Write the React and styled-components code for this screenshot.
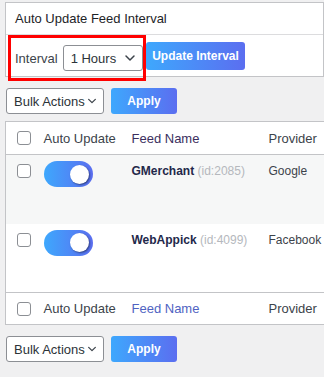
import styled, { createGlobalStyle } from "styled-components";

const feeds = [
  { name: "GMerchant", id: 2085, provider: "Google", alt: true },
  { name: "WebAppick", id: 4099, provider: "Facebook", alt: false },
];

export default function App() {
  return (
    <Page>
      <GlobalStyle />
      <Panel>
        <PanelHeader>Auto Update Feed Interval</PanelHeader>
        <PanelBody>
          <Highlight>
            <Label>Interval</Label>
            <Select width="80px">
              <span>1 Hours</span>
              <Chevron />
            </Select>
          </Highlight>
          <GradientButton width="99px" height="28px">
            Update Interval
          </GradientButton>
        </PanelBody>
      </Panel>

      <Actions />

      <Table>
        <colgroup>
          <col style={{ width: 33 }} />
          <col style={{ width: 88 }} />
          <col style={{ width: 137 }} />
          <col />
        </colgroup>
        <thead>
          <HeadRow>
            <Cell>
              <Checkbox />
            </Cell>
            <Cell>Auto Update</Cell>
            <Cell>
              <SortLink>Feed Name</SortLink>
            </Cell>
            <Cell>Provider</Cell>
          </HeadRow>
        </thead>
        <tbody>
          {feeds.map((feed) => (
            <Row key={feed.id} alt={feed.alt}>
              <Cell>
                <Checkbox />
              </Cell>
              <Cell>
                <Toggle>
                  <Knob />
                </Toggle>
              </Cell>
              <Cell>
                <FeedName>{feed.name}</FeedName>{" "}
                <FeedId>(id:{feed.id})</FeedId>
              </Cell>
              <Cell>{feed.provider}</Cell>
            </Row>
          ))}
        </tbody>
        <tfoot>
          <FootRow>
            <Cell>
              <Checkbox />
            </Cell>
            <Cell>Auto Update</Cell>
            <Cell>
              <SortLink footer>Feed Name</SortLink>
            </Cell>
            <Cell>Provider</Cell>
          </FootRow>
        </tfoot>
      </Table>

      <Actions />
    </Page>
  );
}

function Actions() {
  return (
    <ActionBar>
      <Select width="98px">
        <span>Bulk Actions</span>
        <Chevron small />
      </Select>
      <GradientButton width="66px" height="26px">
        Apply
      </GradientButton>
    </ActionBar>
  );
}

function Chevron({ small }) {
  const s = small ? 10 : 12;
  return (
    <svg width={s} height={s} viewBox="0 0 12 12">
      <path
        d="M2 4 L6 8 L10 4"
        fill="none"
        stroke="#3c434a"
        strokeWidth="1.5"
        strokeLinecap="round"
        strokeLinejoin="round"
      />
    </svg>
  );
}

const GlobalStyle = createGlobalStyle`
  body {
    margin: 0;
    background: #f0f0f1;
    font-family: "Liberation Sans", Arial, sans-serif;
    font-size: 13px;
    color: #3c434a;
    overflow: hidden;
  }
`;

const Page = styled.div`
  width: 324px;
  box-sizing: border-box;
  overflow: hidden;
  padding: 2px 0 0 5px;
`;

const Panel = styled.div`
  width: 319px;
  background: #fff;
  border: 1px solid #c3c4c7;
  height: 75px;
  box-sizing: border-box;
`;

const PanelHeader = styled.div`
  height: 31px;
  border-bottom: 1px solid #dcdcde;
  display: flex;
  align-items: center;
  padding-left: 9px;
  font-size: 13px;
  color: #1d2327;
`;

const PanelBody = styled.div`
  display: flex;
  align-items: center;
  padding-left: 2px;
`;

const Highlight = styled.div`
  display: flex;
  align-items: center;
  gap: 5px;
  width: 138px;
  height: 46px;
  box-sizing: border-box;
  border: 3px solid #ff0000;
  padding-left: 4px;
  margin-bottom: -4px;
`;

const Label = styled.span`
  font-size: 13px;
  color: #3c434a;
`;

const Select = styled.div`
  width: ${(p) => p.width};
  height: 26px;
  box-sizing: border-box;
  background: #fff;
  border: 1px solid #8c8f94;
  border-radius: 3px;
  display: flex;
  align-items: center;
  justify-content: space-between;
  padding: 0 6px 0 7px;
  font-size: 13px;
  white-space: nowrap;
  color: #2c3338;
`;

const GradientButton = styled.div`
  width: ${(p) => p.width};
  height: ${(p) => p.height};
  box-sizing: border-box;
  display: flex;
  align-items: center;
  justify-content: center;
  border-radius: 3px;
  background: linear-gradient(90deg, #3ea8fd 0%, #5b6ef0 100%);
  color: #fff;
  font-weight: 700;
  font-size: 12px;
  white-space: nowrap;
`;

const ActionBar = styled.div`
  display: flex;
  align-items: center;
  gap: 7px;
  padding: 11px 0 7px 1px;
`;

const Table = styled.table`
  width: 330px;
  table-layout: fixed;
  border-collapse: collapse;
  background: #fff;
  border: 1px solid #c3c4c7;
`;

const Cell = styled.td`
  padding: 0 0 0 5px;
  vertical-align: middle;
  white-space: nowrap;
  font-size: 13px;
  &:first-child {
    padding-left: 11px;
  }
`;

const HeadRow = styled.tr`
  height: 33px;
  border-bottom: 1px solid #c3c4c7;
`;

const FootRow = styled.tr`
  height: 32px;
  border-top: 1px solid #c3c4c7;
`;

const Row = styled.tr`
  height: 69px;
  background: ${(p) => (p.alt ? "#f6f7f7" : "#fff")};
  td {
    vertical-align: top;
    padding-top: 9px;
    font-size: 12px;
  }
`;

const SortLink = styled.span`
  color: ${(p) => (p.footer ? "#4f63c2" : "#3b2f5e")};
`;

const Checkbox = styled.div`
  width: 14px;
  height: 14px;
  box-sizing: border-box;
  border: 1px solid #8c8f94;
  border-radius: 3px;
  background: #fff;
`;

const Toggle = styled.div`
  width: 49px;
  height: 26px;
  border-radius: 13px;
  background: linear-gradient(90deg, #3ea8fd 0%, #5b6ef0 100%);
  display: flex;
  align-items: center;
  justify-content: flex-end;
  padding-right: 4px;
  box-sizing: border-box;
  margin-top: -3px;
`;

const Knob = styled.div`
  width: 19px;
  height: 19px;
  border-radius: 50%;
  background: #fff;
  box-shadow: 1px 1px 2px rgba(0, 0, 0, 0.45);
`;

const FeedName = styled.span`
  font-weight: 700;
  color: #23284a;
`;

const FeedId = styled.span`
  color: #b5b8bd;
`;
